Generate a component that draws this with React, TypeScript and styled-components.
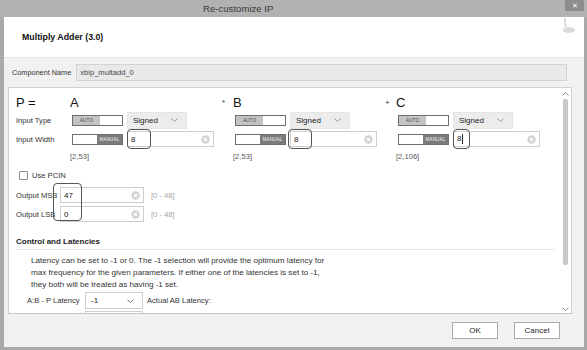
import React from "react";
import styled, { createGlobalStyle } from "styled-components";

const Global = createGlobalStyle`
  html, body { margin: 0; padding: 0; background: #f0f0f0; }
  body { font-family: "Liberation Sans", Arial, sans-serif; font-size: 7.6px; color: #2a2a2a; }
  * { box-sizing: border-box; }
`;

const Window = styled.div`
  width: 587px;
  height: 350px;
  display: flex;
  flex-direction: column;
  background: #a9a9a9;
  overflow: hidden;
`;

const TitleBar = styled.div`
  height: 17px;
  flex: none;
  display: flex;
  align-items: flex-start;
  background: #b2b2b2;
`;

const Title = styled.div`
  padding-left: 203px;
  padding-top: 3px;
  font-size: 9.6px;
  color: #3a3a3a;
`;

const CloseBtn = styled.div`
  margin-left: auto;
  margin-right: 3px;
  width: 19px;
  height: 11px;
  background: #8d8d8d;
  color: #fff;
  font-size: 7px;
  line-height: 11px;
  text-align: center;
`;

const Frame = styled.div`
  flex: 1;
  min-height: 0;
  display: flex;
  padding: 0 3px 3px 4px;
  background: #a9a9a9;
`;

const Body = styled.div`
  flex: 1;
  display: flex;
  flex-direction: column;
  background: #f1f1f1;
`;

const Header = styled.div`
  height: 41px;
  flex: none;
  display: flex;
  align-items: center;
  padding-left: 18px;
  padding-right: 8px;
  background: #fff;
  border-bottom: 1px solid #e4e4e4;
  font-weight: bold;
  font-size: 8.8px;
  color: #111;
`;

const Logo = styled.svg`
  margin-left: auto;
  align-self: flex-start;
  margin-top: 1px;
`;

const NameRow = styled.div`
  height: 29px;
  flex: none;
  display: flex;
  align-items: center;
  padding: 0 17px 0 8px;
`;

const FieldLabel = styled.span`
  color: #333;
  white-space: nowrap;
  font-size: 7.3px;
`;

const NameInput = styled.div`
  flex: 1;
  margin-left: 5px;
  height: 17px;
  line-height: 15px;
  padding-left: 3px;
  background: #e9e9e9;
  border: 1px solid #d3d3d3;
  color: #444;
`;

const Panel = styled.div`
  flex: 1;
  min-height: 0;
  margin: 0 12px 0 4px;
  display: flex;
  background: #fff;
  border: 1px solid #d0d0d0;
  border-bottom-color: #c4c4c4;
  overflow: hidden;
`;

const Content = styled.div`
  flex: 1;
  padding: 6px 0 0 7px;
  overflow: hidden;
`;

const ParamGrid = styled.div`
  display: grid;
  grid-template-columns: 43px 163px 163px 163px;
  grid-template-rows: 17px 18px 20px 14px;
  align-items: center;
`;

const BigLabel = styled.div`
  font-size: 13px;
  color: #111;
  white-space: nowrap;
`;

const ColHead = styled.div`
  display: flex;
  align-items: center;
`;

const Op = styled.span`
  width: 11px;
  font-size: 8px;
  color: #333;
`;

const RowLabel = styled.div`
  color: #333;
  white-space: nowrap;
`;

const Cell = styled.div<{ $pad?: number }>`
  display: flex;
  align-items: center;
  gap: 4px;
  padding-left: ${(p) => p.$pad ?? 13}px;
`;

const Toggle = styled.div<{ $mode: "auto" | "manual" }>`
  width: 51px;
  height: 11px;
  display: flex;
  flex-direction: ${(p) => (p.$mode === "auto" ? "row" : "row-reverse")};
  border: 1px solid #6e6e6e;
  background: #fff;
`;

const ToggleKnob = styled.div<{ $mode: "auto" | "manual" }>`
  width: ${(p) => (p.$mode === "auto" ? 27 : 25)}px;
  height: 100%;
  display: flex;
  align-items: center;
  justify-content: center;
  background: ${(p) => (p.$mode === "auto" ? "#c3c3c3" : "#7b7b7b")};
  color: ${(p) => (p.$mode === "auto" ? "#444" : "#f4f4f4")};
  font-size: 4.5px;
  letter-spacing: 0.2px;
`;

const SelectBox = styled.div<{ $w: number; $bg: string; $border: string }>`
  width: ${(p) => p.$w}px;
  height: 17px;
  display: flex;
  align-items: center;
  justify-content: space-between;
  padding: 0 8px 0 5px;
  background: ${(p) => p.$bg};
  border: 1px solid ${(p) => p.$border};
  font-size: 8px;
  color: #222;
`;

const TextInput = styled.div<{ $w: number }>`
  position: relative;
  width: ${(p) => p.$w}px;
  height: 16px;
  display: flex;
  align-items: center;
  justify-content: space-between;
  padding: 0 3px 0 3px;
  background: #fff;
  border: 1px solid #cdcdcd;
  font-size: 8px;
  color: #222;
`;

const Mark = styled.div<{ $l: number; $t: number; $w: number; $h: number }>`
  position: absolute;
  left: ${(p) => p.$l}px;
  top: ${(p) => p.$t}px;
  width: ${(p) => p.$w}px;
  height: ${(p) => p.$h}px;
  border: 1px solid #555;
  border-radius: 4px;
  pointer-events: none;
`;

const Caret = styled.span`
  display: inline-block;
  width: 1px;
  height: 10px;
  margin-left: 1px;
  background: #222;
  vertical-align: middle;
`;

const Range = styled.div<{ $pad?: number }>`
  padding-left: ${(p) => p.$pad ?? 11}px;
  color: #555;
  font-size: 7.6px;
`;

const CheckRow = styled.label`
  display: flex;
  align-items: center;
  gap: 4px;
  margin: 5px 0 0 3px;
  height: 14px;
  color: #333;
`;

const Check = styled.span`
  width: 9px;
  height: 9px;
  border: 1px solid #8a8a8a;
  border-radius: 1px;
  background: #fff;
`;

const OutputGroup = styled.div`
  position: relative;
  display: flex;
  flex-direction: column;
  gap: 3px;
  margin-top: 5px;
`;

const OutRow = styled.div`
  display: flex;
  align-items: center;
  height: 16px;
`;

const OutLabel = styled.div`
  width: 44px;
  color: #333;
  white-space: nowrap;
`;

const Hint = styled.span`
  margin-left: 7px;
  color: #a5a5a5;
`;

const SectionTitle = styled.div`
  margin-top: 15px;
  padding-bottom: 3px;
  border-bottom: 1px solid #e6e6e6;
  font-weight: bold;
  color: #222;
  font-size: 8px;
  margin-right: 6px;
`;

const Para = styled.p`
  margin: 5px 0 0 15px;
  line-height: 12px;
  color: #333;
  font-size: 8.1px;
`;

const LatRow = styled.div`
  display: flex;
  align-items: center;
  margin: 1px 0 0 11px;
  height: 17px;
  color: #333;
`;

const LatLabel = styled.div`
  width: 58px;
  white-space: nowrap;
`;

const LatNote = styled.div`
  margin-left: 4px;
`;

const EmptyBox = styled.div`
  margin: 2px 0 0 69px;
  width: 58px;
  height: 17px;
  border: 1px solid #cfcfcf;
`;

const ScrollBar = styled.div`
  width: 11px;
  flex: none;
  display: flex;
  flex-direction: column;
  align-items: center;
  padding: 4px 0 2px;
`;

const Thumb = styled.div`
  margin-top: 3px;
  width: 5px;
  height: 166px;
  background: #c9c9c9;
  border-radius: 2px;
`;

const Spacer = styled.div`
  flex: 1;
`;

const Footer = styled.div`
  height: 33px;
  flex: none;
  display: flex;
  align-items: center;
  justify-content: flex-end;
  gap: 16px;
  padding-right: 24px;
`;

const Button = styled.div`
  width: 46px;
  height: 17px;
  display: flex;
  align-items: center;
  justify-content: center;
  background: #fff;
  border: 1px solid #a9a9a9;
  color: #222;
  font-size: 8px;
`;

const Chevron = ({ up = false, color = "#9a9a9a" }: { up?: boolean; color?: string }) => (
  <svg width="7" height="4" viewBox="0 0 7 4">
    <path d={up ? "M0.5 3.5 L3.5 0.5 L6.5 3.5" : "M0.5 0.5 L3.5 3.5 L6.5 0.5"} fill="none" stroke={color} strokeWidth="1" />
  </svg>
);

const ClearIcon = () => (
  <svg width="9" height="9" viewBox="0 0 9 9">
    <circle cx="4.5" cy="4.5" r="4.2" fill="#d2d2d2" />
    <path d="M3 3 L6 6 M6 3 L3 6" stroke="#fff" strokeWidth="1.1" />
  </svg>
);

type Col = { op: string; name: string; mark: { l: number; w: number }; caret?: boolean; range: string };

const cols: Col[] = [
  { op: "", name: "A", mark: { l: -1, w: 24 }, range: "[2,53]" },
  { op: "*", name: "B", mark: { l: -3, w: 24 }, range: "[2,53]" },
  { op: "+", name: "C", mark: { l: -1, w: 17 }, caret: true, range: "[2,106]" },
];

export default function App() {
  return (
    <>
      <Global />
      <Window>
        <TitleBar>
          <Title>Re-customize IP</Title>
          <CloseBtn>✕</CloseBtn>
        </TitleBar>
        <Frame>
          <Body>
            <Header>
              Multiply Adder (3.0)
              <Logo width="14" height="16" viewBox="0 0 14 16">
                <path d="M3 0 L3.5 9" stroke="#d4d4d4" strokeWidth="1.6" />
                <ellipse cx="7" cy="12" rx="6" ry="3" fill="#dadada" />
              </Logo>
            </Header>
            <NameRow>
              <FieldLabel>Component Name</FieldLabel>
              <NameInput>xbip_multadd_0</NameInput>
            </NameRow>
            <Panel>
              <Content>
                <ParamGrid>
                  <BigLabel>P =</BigLabel>
                  {cols.map((c) => (
                    <ColHead key={c.name}>
                      <Op>{c.op}</Op>
                      <BigLabel>{c.name}</BigLabel>
                    </ColHead>
                  ))}
                  <RowLabel>Input Type</RowLabel>
                  {cols.map((c) => (
                    <Cell key={c.name}>
                      <Toggle $mode="auto">
                        <ToggleKnob $mode="auto">AUTO</ToggleKnob>
                      </Toggle>
                      <SelectBox $w={60} $bg="#ececec" $border="#e6e6e6">
                        Signed
                        <Chevron />
                      </SelectBox>
                    </Cell>
                  ))}
                  <RowLabel>Input Width</RowLabel>
                  {cols.map((c) => (
                    <Cell key={c.name}>
                      <Toggle $mode="manual">
                        <ToggleKnob $mode="manual">MANUAL</ToggleKnob>
                      </Toggle>
                      <TextInput $w={87}>
                        <span>
                          8{c.caret && <Caret />}
                        </span>
                        <ClearIcon />
                        <Mark $l={c.mark.l} $t={-3} $w={c.mark.w} $h={20} />
                      </TextInput>
                    </Cell>
                  ))}
                  <span />
                  {cols.map((c) => (
                    <Range key={c.name}>{c.range}</Range>
                  ))}
                </ParamGrid>

                <CheckRow>
                  <Check />
                  Use PCIN
                </CheckRow>

                <OutputGroup>
                  <OutRow>
                    <OutLabel>Output MSB</OutLabel>
                    <TextInput $w={84}>
                      47
                      <ClearIcon />
                    </TextInput>
                    <Hint>[0 - 48]</Hint>
                  </OutRow>
                  <OutRow>
                    <OutLabel>Output LSB</OutLabel>
                    <TextInput $w={84}>
                      0
                      <ClearIcon />
                    </TextInput>
                    <Hint>[0 - 48]</Hint>
                  </OutRow>
                  <Mark $l={37} $t={-4} $w={29} $h={38} />
                </OutputGroup>

                <SectionTitle>Control and Latencies</SectionTitle>
                <Para>
                  Latency can be set to -1 or 0. The -1 selection will provide the optimum latency for
                  <br />
                  max frequency for the given parameters. If either one of the latencies is set to -1,
                  <br />
                  they both will be treated as having -1 set.
                </Para>
                <LatRow>
                  <LatLabel>A:B - P Latency</LatLabel>
                  <SelectBox $w={58} $bg="#fff" $border="#cfcfcf">
                    -1
                    <Chevron color="#777" />
                  </SelectBox>
                  <LatNote>Actual AB Latency:</LatNote>
                </LatRow>
                <EmptyBox />
              </Content>
              <ScrollBar>
                <Chevron up color="#8a8a8a" />
                <Thumb />
                <Spacer />
                <Chevron color="#8a8a8a" />
              </ScrollBar>
            </Panel>
            <Footer>
              <Button>OK</Button>
              <Button>Cancel</Button>
            </Footer>
          </Body>
        </Frame>
      </Window>
    </>
  );
}
